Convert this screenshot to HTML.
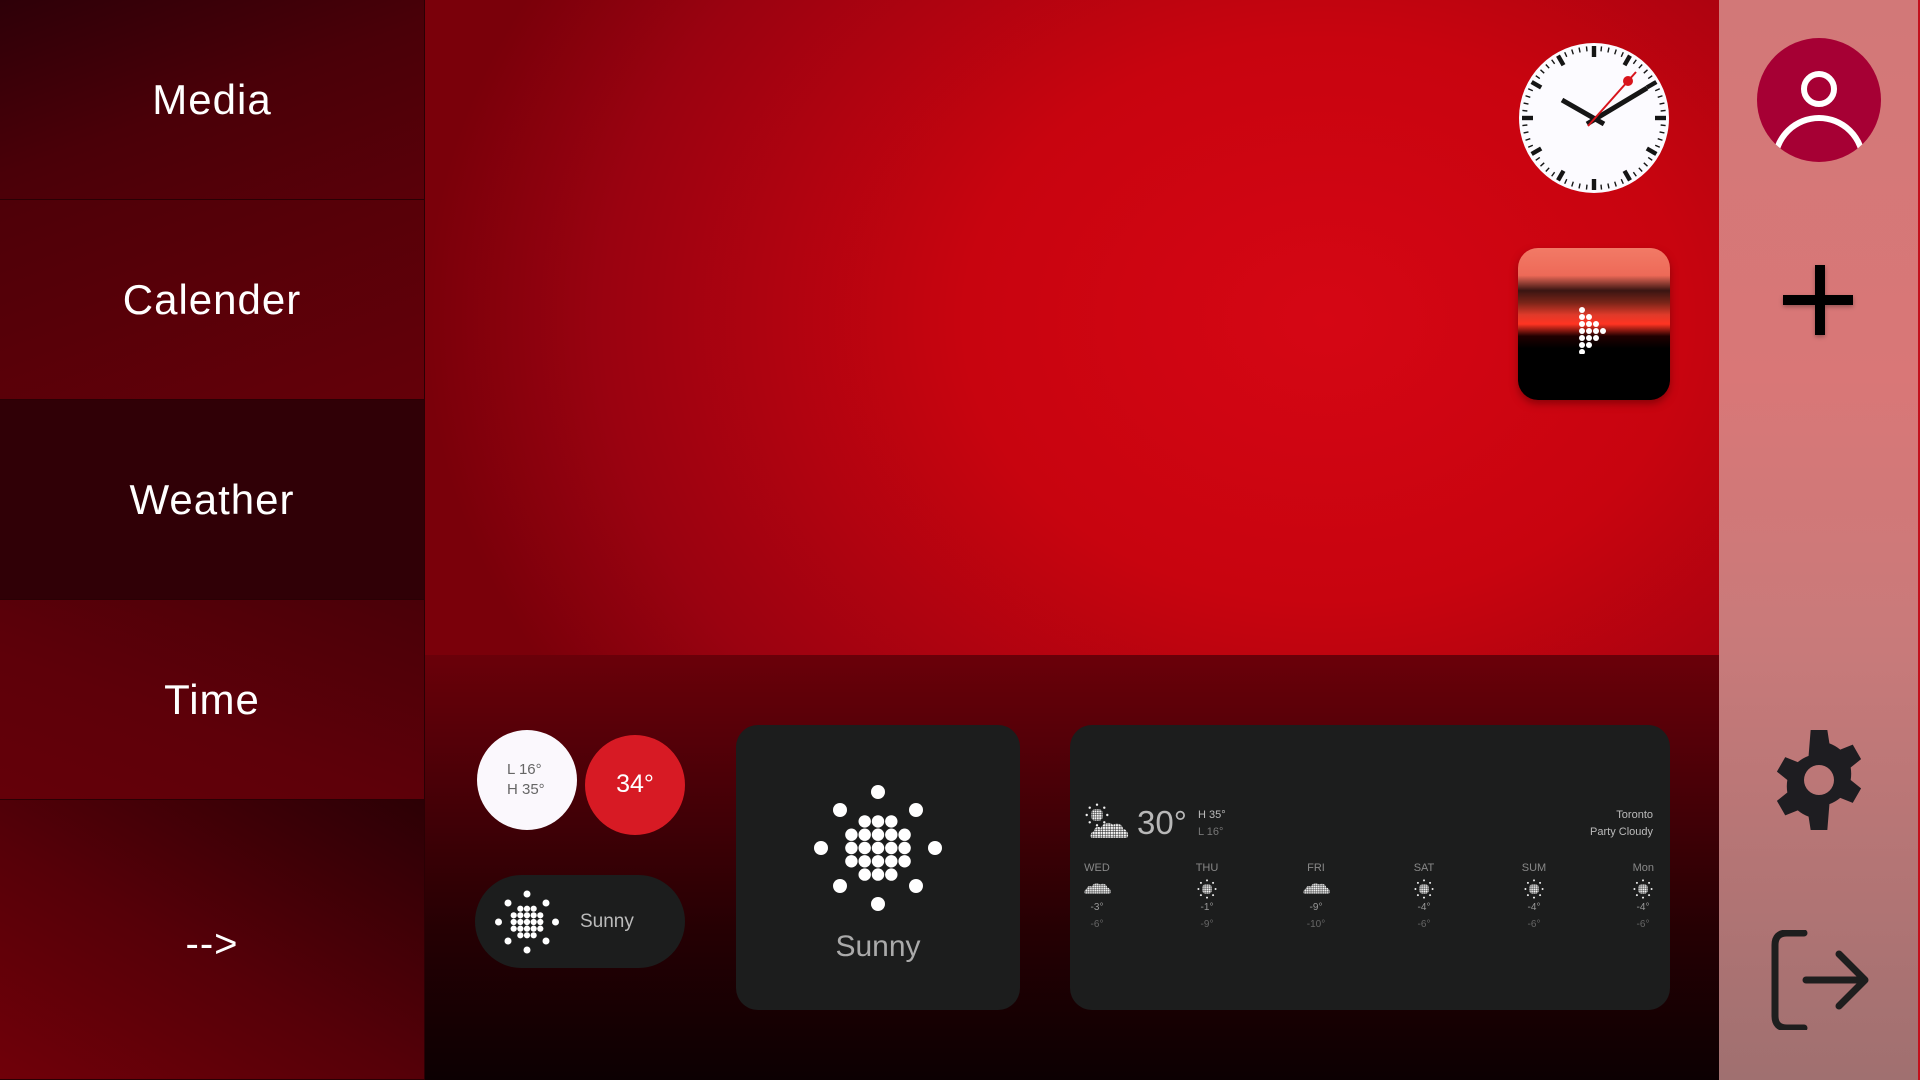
<!DOCTYPE html>
<html><head><meta charset="utf-8">
<style>
*{margin:0;padding:0;box-sizing:border-box}
html,body{width:1920px;height:1080px;overflow:hidden;background:#000;font-family:"Liberation Sans",sans-serif}
.nav{position:absolute;left:0;top:0;width:425px;height:1080px;background:linear-gradient(200deg,#3a0008 0%,#5a0009 30%,#560008 60%,#6a000a 100%)}
.nav .row{position:absolute;left:0;width:425px;border-bottom:1px solid #2a0004;border-right:1px solid #2a0004;color:#fff;font-size:42px;letter-spacing:1px;display:flex;align-items:center;justify-content:center}
.r1{top:0;height:200px;background:linear-gradient(160deg,#2e0008 0%,#4a0008 50%,#5a0009 100%)}
.r2{top:200px;height:200px;background:linear-gradient(160deg,#4e0008,#640009)}
.r3{top:400px;height:200px;background:#300006}
.r4{top:600px;height:200px;background:linear-gradient(200deg,#4a0008,#5e0009 60%,#640009)}
.r5{top:800px;height:280px;background:linear-gradient(30deg,#700009 0%,#560008 45%,#2c0005 100%)}
.main{position:absolute;left:425px;top:0;width:1294px;height:655px;background:radial-gradient(ellipse 900px 700px at 900px 320px,#d50614 0%,#c8040f 40%,#9a0210 80%,#7a000a 100%)}
.bottom{position:absolute;left:425px;top:655px;width:1294px;height:425px;background:linear-gradient(180deg,#6a0009 0%,#4a0007 30%,#250003 65%,#0c0002 100%)}
.side{position:absolute;left:1719px;top:0;width:201px;height:1080px;background:linear-gradient(180deg,#d27878 0%,#d97777 35%,#c87a7a 60%,#a07070 100%);border-right:2px solid #c2101c}
.card{position:absolute;background:#1c1d1d;border-radius:22px}
.t{position:absolute;white-space:nowrap}
</style></head><body>
<svg width="0" height="0" style="position:absolute">
<defs>
<symbol id="sun" viewBox="-70 -70 140 140">
<g fill="#fff">
<circle cx="0" cy="-56" r="7"/><circle cx="0" cy="56" r="7"/><circle cx="-57" cy="0" r="7"/><circle cx="57" cy="0" r="7"/>
<circle cx="-38" cy="-38" r="7"/><circle cx="38" cy="-38" r="7"/><circle cx="-38" cy="38" r="7"/><circle cx="38" cy="38" r="7"/>
<circle cx="-13.3" cy="-26.6" r="6.2"/><circle cx="0" cy="-26.6" r="6.2"/><circle cx="13.3" cy="-26.6" r="6.2"/>
<circle cx="-26.6" cy="-13.3" r="6.2"/><circle cx="-13.3" cy="-13.3" r="6.2"/><circle cx="0" cy="-13.3" r="6.2"/><circle cx="13.3" cy="-13.3" r="6.2"/><circle cx="26.6" cy="-13.3" r="6.2"/>
<circle cx="-26.6" cy="0" r="6.2"/><circle cx="-13.3" cy="0" r="6.2"/><circle cx="0" cy="0" r="6.2"/><circle cx="13.3" cy="0" r="6.2"/><circle cx="26.6" cy="0" r="6.2"/>
<circle cx="-26.6" cy="13.3" r="6.2"/><circle cx="-13.3" cy="13.3" r="6.2"/><circle cx="0" cy="13.3" r="6.2"/><circle cx="13.3" cy="13.3" r="6.2"/><circle cx="26.6" cy="13.3" r="6.2"/>
<circle cx="-13.3" cy="26.6" r="6.2"/><circle cx="0" cy="26.6" r="6.2"/><circle cx="13.3" cy="26.6" r="6.2"/>
</g></symbol>
<pattern id="dots" width="2.6" height="2.6" patternUnits="userSpaceOnUse"><rect width="2.1" height="2.1" fill="#f2f2f2"/></pattern>
<symbol id="cloud" viewBox="0 0 40 20">
<path d="M2 19 C0 19 0 13 4 12 C4 8 9 7 11 9 C12 4 20 2 23 6 C26 3 33 5 33 10 C38 10 40 19 36 19 Z" fill="url(#dots)"/>
</symbol>
<symbol id="ssun" viewBox="-14 -14 28 28">
<g fill="#eee"><circle cx="0" cy="-12" r="1.4"/><circle cx="0" cy="12" r="1.4"/><circle cx="-12" cy="0" r="1.4"/><circle cx="12" cy="0" r="1.4"/><circle cx="-8.5" cy="-8.5" r="1.4"/><circle cx="8.5" cy="-8.5" r="1.4"/><circle cx="-8.5" cy="8.5" r="1.4"/><circle cx="8.5" cy="8.5" r="1.4"/></g>
<rect x="-6.5" y="-6.5" width="13" height="13" rx="4" fill="url(#dots)"/>
</symbol>
</defs></svg>

<div class="nav">
<div class="row r1">Media</div>
<div class="row r2">Calender</div>
<div class="row r3">Weather</div>
<div class="row r4">Time</div>
<div class="row r5" style="font-size:40px;padding-top:10px">--&gt;</div>
</div>

<div class="main"></div>
<div class="bottom"></div>

<svg style="position:absolute;left:1518px;top:42px" width="152" height="152" viewBox="-76 -76 152 152">
<circle r="75" fill="#fcfbff"/>
<g id="ticks"></g>
<line x1="-32" y1="-18" x2="10" y2="6" stroke="#151515" stroke-width="5"/>
<line x1="-7" y1="6" x2="53" y2="-30" stroke="#151515" stroke-width="5"/>
<line x1="-6" y1="8" x2="42" y2="-46" stroke="#d8141c" stroke-width="2"/>
<circle cx="34" cy="-37" r="5" fill="#d8141c"/>
</svg>
<script>
(function(){var g=document.getElementById('ticks'),s='';for(var i=0;i<60;i++){var big=i%5==0;s+='<rect x="'+(big?-2.2:-0.7)+'" y="-72" width="'+(big?4.4:1.4)+'" height="'+(big?11:5)+'" fill="#151515" transform="rotate('+(i*6)+')"/>';}g.innerHTML=s;})();
</script>

<div style="position:absolute;left:1518px;top:248px;width:152px;height:152px;border-radius:20px;overflow:hidden;box-shadow:0 4px 8px rgba(80,0,0,.5);background:linear-gradient(180deg,#f27a66 0%,#ee6a58 18%,#3a1512 28%,#7a2418 36%,#e03a2a 44%,#ff3422 50%,#200000 58%,#000 66%,#000 100%)">
<svg style="position:absolute;left:60px;top:58px" width="30" height="48" viewBox="0 0 30 48"><g fill="#fff">
<circle cx="4" cy="4" r="3"/><circle cx="4" cy="11" r="3"/><circle cx="11" cy="11" r="3"/><circle cx="4" cy="18" r="3"/><circle cx="11" cy="18" r="3"/><circle cx="18" cy="18" r="3"/><circle cx="4" cy="25" r="3"/><circle cx="11" cy="25" r="3"/><circle cx="18" cy="25" r="3"/><circle cx="25" cy="25" r="3"/><circle cx="4" cy="32" r="3"/><circle cx="11" cy="32" r="3"/><circle cx="18" cy="32" r="3"/><circle cx="4" cy="39" r="3"/><circle cx="11" cy="39" r="3"/><circle cx="4" cy="46" r="3"/></g></svg>
</div>

<div style="position:absolute;left:477px;top:730px;width:100px;height:100px;border-radius:50%;background:#fbf8fd"></div>
<div class="t" style="left:507px;top:760px;font-size:15px;color:#666;line-height:20px">L 16°<br>H 35°</div>
<div style="position:absolute;left:585px;top:735px;width:100px;height:100px;border-radius:50%;background:#d71a24"></div>
<div class="t" style="left:585px;top:770px;width:100px;text-align:center;font-size:25px;color:#fff">34°</div>

<div style="position:absolute;left:475px;top:875px;width:210px;height:93px;border-radius:47px;background:#1c1d1d"></div>
<svg style="position:absolute;left:492px;top:887px" width="70" height="70"><use href="#sun" width="70" height="70"/></svg>
<div class="t" style="left:580px;top:911px;font-size:19px;color:#bbb">Sunny</div>

<div class="card" style="left:736px;top:725px;width:284px;height:285px"></div>
<svg style="position:absolute;left:808px;top:778px" width="140" height="140"><use href="#sun" width="140" height="140"/></svg>
<div class="t" style="left:736px;top:930px;width:284px;text-align:center;font-size:30px;color:#aaa">Sunny</div>

<div class="card" style="left:1070px;top:725px;width:600px;height:285px"></div>
<svg style="position:absolute;left:1085px;top:803px" width="24" height="24"><use href="#ssun" width="24" height="24"/></svg>
<svg style="position:absolute;left:1090px;top:816px" width="40" height="28"><use href="#cloud" width="40" height="26"/></svg>
<div class="t" style="left:1137px;top:804px;font-size:33px;color:#b8b8b8">30°</div>
<div class="t" style="left:1198px;top:809px;font-size:11px;color:#bbb">H 35°</div>
<div class="t" style="left:1198px;top:826px;font-size:11px;color:#777">L 16°</div>
<div class="t" style="left:1500px;width:153px;text-align:right;top:809px;font-size:11px;color:#bbb">Toronto</div>
<div class="t" style="left:1500px;width:153px;text-align:right;top:826px;font-size:11px;color:#bbb">Party Cloudy</div>

<div style="position:absolute;left:0;top:0">
<div class="t" style="left:1077px;width:40px;text-align:center;top:862px;font-size:11px;color:#888">WED</div>
<svg style="position:absolute;left:1084px;top:880px" width="28" height="16"><use href="#cloud" width="28" height="15"/></svg>
<div class="t" style="left:1077px;width:40px;text-align:center;top:902px;font-size:10px;color:#999">-3°</div>
<div class="t" style="left:1077px;width:40px;text-align:center;top:919px;font-size:10px;color:#666">-6°</div>

<div class="t" style="left:1187px;width:40px;text-align:center;top:862px;font-size:11px;color:#888">THU</div>
<svg style="position:absolute;left:1197px;top:879px" width="20" height="20"><use href="#ssun" width="20" height="20"/></svg>
<div class="t" style="left:1187px;width:40px;text-align:center;top:902px;font-size:10px;color:#999">-1°</div>
<div class="t" style="left:1187px;width:40px;text-align:center;top:919px;font-size:10px;color:#666">-9°</div>

<div class="t" style="left:1296px;width:40px;text-align:center;top:862px;font-size:11px;color:#888">FRI</div>
<svg style="position:absolute;left:1303px;top:880px" width="28" height="16"><use href="#cloud" width="28" height="15"/></svg>
<div class="t" style="left:1296px;width:40px;text-align:center;top:902px;font-size:10px;color:#999">-9°</div>
<div class="t" style="left:1296px;width:40px;text-align:center;top:919px;font-size:10px;color:#666">-10°</div>

<div class="t" style="left:1404px;width:40px;text-align:center;top:862px;font-size:11px;color:#888">SAT</div>
<svg style="position:absolute;left:1414px;top:879px" width="20" height="20"><use href="#ssun" width="20" height="20"/></svg>
<div class="t" style="left:1404px;width:40px;text-align:center;top:902px;font-size:10px;color:#999">-4°</div>
<div class="t" style="left:1404px;width:40px;text-align:center;top:919px;font-size:10px;color:#666">-6°</div>

<div class="t" style="left:1514px;width:40px;text-align:center;top:862px;font-size:11px;color:#888">SUM</div>
<svg style="position:absolute;left:1524px;top:879px" width="20" height="20"><use href="#ssun" width="20" height="20"/></svg>
<div class="t" style="left:1514px;width:40px;text-align:center;top:902px;font-size:10px;color:#999">-4°</div>
<div class="t" style="left:1514px;width:40px;text-align:center;top:919px;font-size:10px;color:#666">-6°</div>

<div class="t" style="left:1614px;width:40px;text-align:right;top:862px;font-size:11px;color:#888">Mon</div>
<svg style="position:absolute;left:1633px;top:879px" width="20" height="20"><use href="#ssun" width="20" height="20"/></svg>
<div class="t" style="left:1623px;width:40px;text-align:center;top:902px;font-size:10px;color:#999">-4°</div>
<div class="t" style="left:1623px;width:40px;text-align:center;top:919px;font-size:10px;color:#666">-6°</div>
</div>

<div class="side"></div>
<svg style="position:absolute;left:1757px;top:38px" width="124" height="124" viewBox="1757 38 124 124">
<defs><clipPath id="av"><circle cx="1819" cy="100" r="62"/></clipPath></defs>
<circle cx="1819" cy="100" r="62" fill="#a60034"/>
<circle cx="1819" cy="89" r="15" fill="none" stroke="#fff" stroke-width="6"/>
<circle cx="1819" cy="162" r="44" fill="none" stroke="#fff" stroke-width="6" clip-path="url(#av)"/>
</svg>
<svg style="position:absolute;left:1782px;top:264px;filter:drop-shadow(0 2px 2px rgba(0,0,0,.3))" width="76" height="76" viewBox="0 0 76 76">
<rect x="33" y="1" width="10" height="70" fill="#000"/><rect x="1" y="31" width="70" height="10" fill="#000"/>
</svg>
<svg style="position:absolute;left:1769px;top:730px" width="100" height="100" viewBox="0 0 24 24">
<path fill="#1e1d21" d="M10 0h4l.5 3.2a9 9 0 0 1 2.6 1.5l3-1.2 2 3.5-2.5 2a9 9 0 0 1 0 3l2.5 2-2 3.5-3-1.2a9 9 0 0 1-2.6 1.5L14 24h-4l-.5-3.2a9 9 0 0 1-2.6-1.5l-3 1.2-2-3.5 2.5-2a9 9 0 0 1 0-3l-2.5-2 2-3.5 3 1.2a9 9 0 0 1 2.6-1.5Z M12 8.4a3.6 3.6 0 1 0 0 7.2a3.6 3.6 0 1 0 0-7.2Z" fill-rule="evenodd"/>
</svg>
<svg style="position:absolute;left:1769px;top:930px" width="100" height="100" viewBox="0 0 100 100">
<path d="M35 3H18Q6 3 6 15V86Q6 98 18 98H35" fill="none" stroke="#1e1e1e" stroke-width="7" stroke-linecap="round"/>
<path d="M37 50H95M70 24L96 50L70 76" fill="none" stroke="#1e1e1e" stroke-width="7" stroke-linecap="round" stroke-linejoin="round"/>
</svg>
</body></html>
